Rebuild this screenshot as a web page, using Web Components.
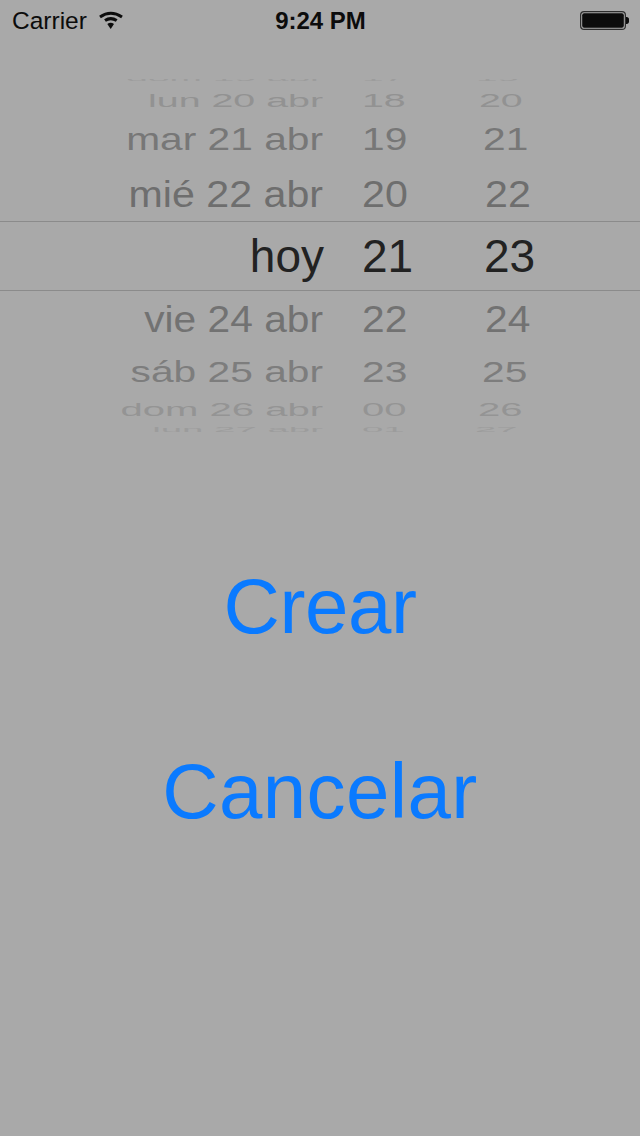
<!DOCTYPE html>
<html>
<head>
<meta charset="utf-8">
<title>Crear</title>
<style>
html,body{margin:0;padding:0;background:#a9a9a9}
body{width:640px;height:1136px;overflow:hidden;font-family:"Liberation Sans",Arial,sans-serif}
</style>
</head>
<body>
<app-screen>
  <status-bar carrier="Carrier" time="9:24 PM"></status-bar>
  <date-picker>
    <picker-row date="dom 19 abr" hour="17" min="19" sx=".845" sy=".14" shift="2" color="#9c9c9c" h="20"></picker-row>
    <picker-row date="lun 20 abr" hour="18" min="20" sx=".855" sy=".41" shift="5" color="#929292" h="22"></picker-row>
    <picker-row date="mar 21 abr" hour="19" min="21" sx=".885" sy=".67" shift="9" color="#777" h="56"></picker-row>
    <picker-row date="mié 22 abr" hour="20" min="22" sx=".895" sy=".8" shift="11" color="#6e6e6e" h="54"></picker-row>
    <picker-row date="hoy" hour="21" min="23" sx="1" sy="1" shift="10" color="#222" h="70" selected></picker-row>
    <picker-row date="vie 24 abr" hour="22" min="24" sx=".885" sy=".8" shift="11" color="#727272" h="56"></picker-row>
    <picker-row date="sáb 25 abr" hour="23" min="25" sx=".885" sy=".65" shift="8" color="#7d7d7d" h="50"></picker-row>
    <picker-row date="dom 26 abr" hour="00" min="26" sx=".87" sy=".38" shift="4" color="#949494" h="26"></picker-row>
    <picker-row date="lun 27 abr" hour="01" min="27" sx=".835" sy=".14" shift="1" color="#9c9c9c" h="14"></picker-row>
  </date-picker>
  <action-button style="margin-top:76px;letter-spacing:-.4px">Crear</action-button>
  <action-button style="letter-spacing:.4px">Cancelar</action-button>
</app-screen>

<template id="screen-tpl">
  <style>
    :host{display:flex;flex-direction:column;width:640px;height:1136px;background:#a9a9a9}
  </style>
  <slot></slot>
</template>

<template id="status-tpl">
  <style>
    :host{display:grid;grid-template-columns:1fr auto 1fr;align-items:center;box-sizing:border-box;height:40px;padding:1px 11px 0 12px;color:#0c0c0c;font-size:24px}
    .left{display:flex;align-items:center;gap:11px}
    #carrier{font-size:24.5px}
    .time{font-weight:bold}
    .right{display:flex;justify-content:flex-end}
    svg{display:block}
  </style>
  <div class="left">
    <span id="carrier"></span>
    <svg width="26" height="19" viewBox="0 0 26 19" fill="none" stroke="#0c0c0c" stroke-width="3">
      <path d="M2 6Q12.7-1.5 24 6"/>
      <path d="M7 9.6Q12.7 5.6 18.7 9.6"/>
      <path d="M9.3 13Q12.7 10.5 16 13L12.7 18Z" fill="#0c0c0c" stroke="none"/>
    </svg>
  </div>
  <span class="time" id="time"></span>
  <div class="right">
    <svg width="49" height="19" viewBox="0 0 49 19">
      <rect x=".6" y=".6" width="44.8" height="17.8" rx="3.5" fill="none" stroke="#2e2e2e" stroke-width="1.2"/>
      <rect x="2.2" y="2.2" width="41.6" height="14.6" rx="2" fill="#0c0c0c"/>
      <path d="M46 6h.8c1.2 0 2.2 1 2.2 2.2v2.6c0 1.2-1 2.2-2.2 2.2H46z" fill="#0c0c0c"/>
    </svg>
  </div>
</template>

<template id="picker-tpl">
  <style>
    :host{display:flex;flex-direction:column;margin-top:29px;height:368px;overflow:hidden;clip-path:inset(10px 0 5px 0)}
  </style>
  <slot></slot>
</template>

<template id="row-tpl">
  <style>
    :host{display:grid;grid-template-columns:324px 38px 112px 1fr;grid-template-rows:100%;align-items:center;flex:none;box-sizing:border-box;font-size:46px;line-height:1;white-space:nowrap}
    :host([selected]){border-top:1px solid #8b8b8b;border-bottom:1px solid #8b8b8b}
    span{display:block}
    .date{grid-column:1;margin-right:1px;text-align:right;transform-origin:right center}
    :host([selected]) .date{margin-right:0}
    .hour{grid-column:3;transform-origin:left center}
    .min{grid-column:4;transform-origin:left center}
  </style>
  <span class="date"></span><span class="hour"></span><span class="min"></span>
</template>

<template id="button-tpl">
  <style>
    :host{display:flex;justify-content:center;align-items:center;flex:none;height:185px;font-size:78px;color:#0a7aff;line-height:1;cursor:pointer}
  </style>
  <slot></slot>
</template>

<script>
const shadowFrom=(el,id)=>el.attachShadow({mode:'open'}).appendChild(document.getElementById(id).content.cloneNode(true));

class AppScreen extends HTMLElement{
  constructor(){
    super();
    shadowFrom(this,'screen-tpl');
  }
}

class StatusBar extends HTMLElement{
  constructor(){
    super();
    shadowFrom(this,'status-tpl');
  }
  connectedCallback(){
    this.shadowRoot.getElementById('carrier').textContent=this.getAttribute('carrier');
    this.shadowRoot.getElementById('time').textContent=this.getAttribute('time');
  }
}

class DatePicker extends HTMLElement{
  constructor(){
    super();
    shadowFrom(this,'picker-tpl');
  }
}

class PickerRow extends HTMLElement{
  constructor(){
    super();
    shadowFrom(this,'row-tpl');
  }
  connectedCallback(){
    const root=this.shadowRoot;
    const sx=this.getAttribute('sx'),sy=this.getAttribute('sy');
    const date=root.querySelector('.date'),hour=root.querySelector('.hour'),min=root.querySelector('.min');
    date.textContent=this.getAttribute('date');
    hour.textContent=this.getAttribute('hour');
    min.textContent=this.getAttribute('min');
    this.style.height=this.getAttribute('h')+'px';
    this.style.color=this.getAttribute('color');
    min.style.marginLeft=this.getAttribute('shift')+'px';
    // wheel projection: rows flatten toward the top and bottom of the drum
    date.style.transform=hour.style.transform=min.style.transform=`scale(${sx},${sy})`;
  }
}

class ActionButton extends HTMLElement{
  constructor(){
    super();
    shadowFrom(this,'button-tpl');
  }
}

customElements.define('app-screen',AppScreen);
customElements.define('status-bar',StatusBar);
customElements.define('date-picker',DatePicker);
customElements.define('picker-row',PickerRow);
customElements.define('action-button',ActionButton);
</script>
</body>
</html>
